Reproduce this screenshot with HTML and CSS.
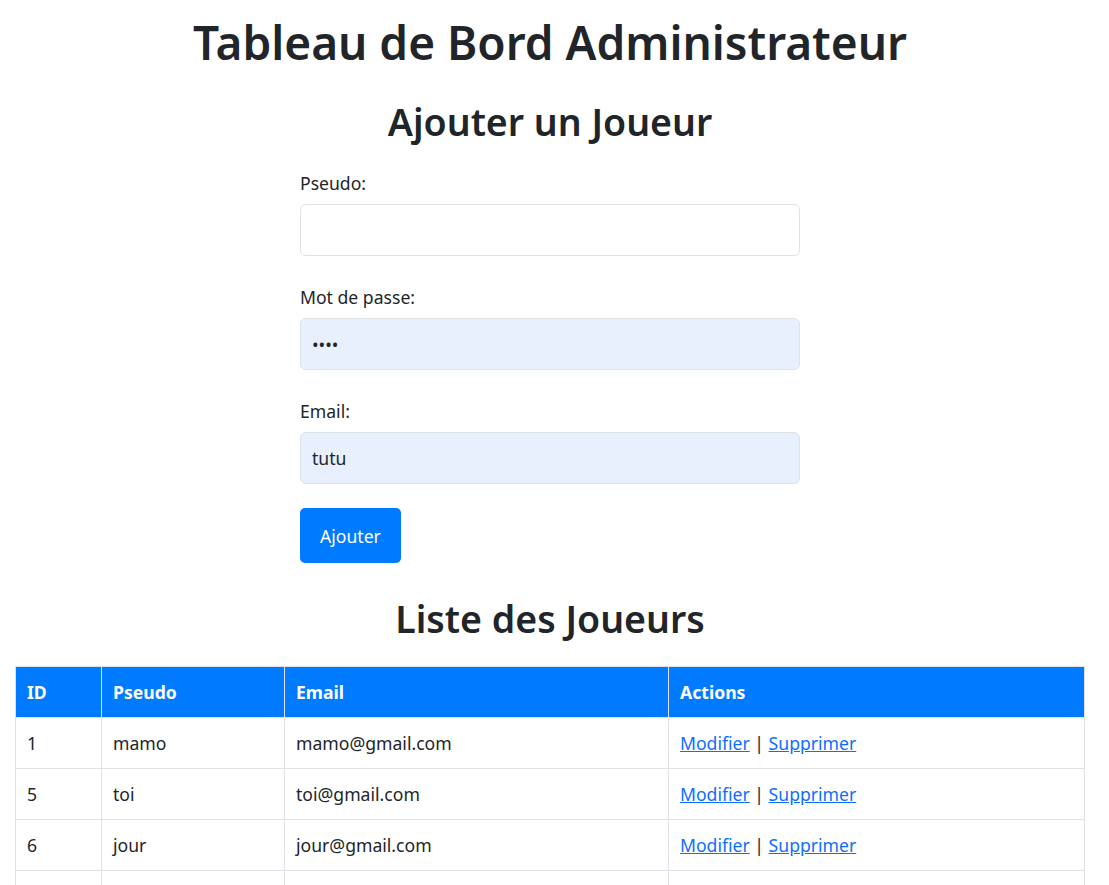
FILE: index.html
```html
<!DOCTYPE html>
<html lang="fr">
<head>
<meta charset="utf-8">
<title>Tableau de Bord Administrateur</title>
<link rel="stylesheet" href="styles.css">
</head>
<body>
<div class="page">
  <h1 class="title">Tableau de Bord Administrateur</h1>
  <h2 class="subtitle">Ajouter un Joueur</h2>
  <form class="player-form">
    <div class="field">
      <label class="field-label" for="pseudo">Pseudo:</label>
      <input class="field-input" id="pseudo" type="text">
    </div>
    <div class="field">
      <label class="field-label" for="mdp">Mot de passe:</label>
      <input class="field-input autofill" id="mdp" type="password" value="tutu">
    </div>
    <div class="field">
      <label class="field-label" for="email">Email:</label>
      <input class="field-input autofill" id="email" type="text" value="tutu">
    </div>
    <button class="btn-primary" type="button">Ajouter</button>
  </form>
  <h2 class="subtitle list-title">Liste des Joueurs</h2>
  <table class="players">
    <thead>
      <tr>
        <th class="col-id">ID</th>
        <th class="col-pseudo">Pseudo</th>
        <th class="col-email">Email</th>
        <th class="col-actions">Actions</th>
      </tr>
    </thead>
    <tbody>
      <tr>
        <td>1</td><td>mamo</td><td>mamo@gmail.com</td>
        <td><a href="#">Modifier</a> | <a href="#">Supprimer</a></td>
      </tr>
      <tr>
        <td>5</td><td>toi</td><td>toi@gmail.com</td>
        <td><a href="#">Modifier</a> | <a href="#">Supprimer</a></td>
      </tr>
      <tr>
        <td>6</td><td>jour</td><td>jour@gmail.com</td>
        <td><a href="#">Modifier</a> | <a href="#">Supprimer</a></td>
      </tr>
      <tr class="row-more">
        <td></td><td></td><td></td><td></td>
      </tr>
    </tbody>
  </table>
</div>
</body>
</html>
```

FILE: styles.css
```css
html, body {
  margin: 0;
  padding: 0;
  background: #fff;
}

body {
  font-family: "Noto Sans", "Open Sans", sans-serif;
  font-size: 17.6px;
  line-height: 26px;
  color: #212529;
}

.page {
  max-width: 1100px;
  padding: 0 15px;
  box-sizing: border-box;
}

.title {
  margin: 10px 0 0;
  font-size: 46px;
  line-height: 64px;
  font-weight: 600;
  text-align: center;
}

.subtitle {
  margin: 26px 0 0;
  font-size: 37.5px;
  line-height: 44px;
  font-weight: 600;
  text-align: center;
}

.player-form {
  width: 500px;
  margin: 26px auto 0;
}

.field {
  margin-bottom: 28px;
}

.field-label {
  display: block;
  margin-bottom: 8px;
}

.field-input {
  display: block;
  box-sizing: border-box;
  width: 100%;
  height: 52px;
  padding: 0 11px;
  border: 1px solid #dee2e6;
  border-radius: 6px;
  font-family: inherit;
  font-size: 17.6px;
  color: #212529;
  background: #fff;
}

.field-input.autofill {
  background: #e8f0fe;
}

.btn-primary {
  margin-top: -4px;
  height: 55px;
  padding: 0 20px;
  border: none;
  border-radius: 5px;
  background: #007bff;
  color: #fff;
  font-family: inherit;
  font-size: 17.6px;
}

.list-title {
  margin-top: 34px;
}

.players {
  width: 100%;
  margin-top: 25px;
  border-collapse: collapse;
}

.players th,
.players td {
  border: 1px solid #dee2e6;
  padding: 12px 11px;
  text-align: left;
  height: 26px;
}

.players th {
  background: #007bff;
  color: #fff;
  font-weight: 700;
}

.col-id { width: 63px; }
.col-pseudo { width: 160px; }
.col-email { width: 361px; }

.players a {
  color: #0d6efd;
  text-decoration: underline;
}
```
